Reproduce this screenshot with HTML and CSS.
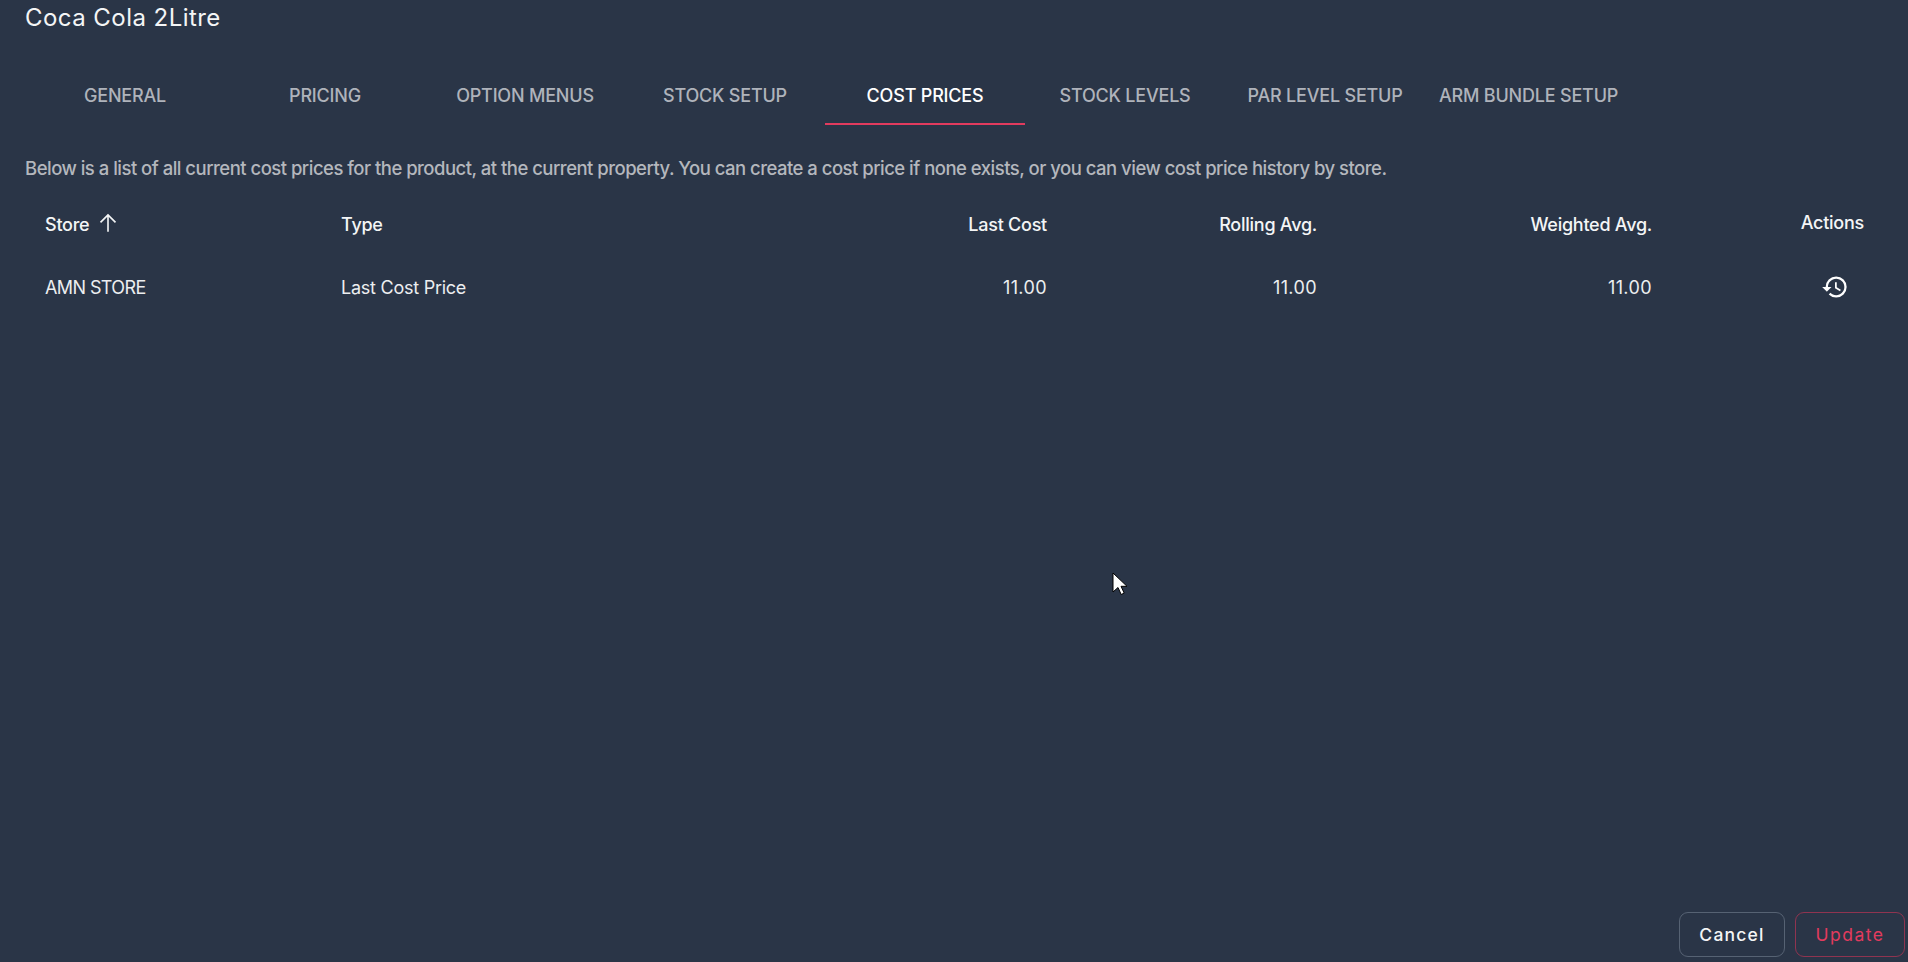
FILE: index.html
```html
<!DOCTYPE html>
<html>
<head>
    <title>Coca Cola 2Litre - Cost Prices</title>
    <link rel="stylesheet" href="styles.css">
</head>
<body>
    <div class="page">
        <h2 class="title">Coca Cola 2Litre</h2>

        <div class="tabs">
            <div class="tab">GENERAL</div>
            <div class="tab">PRICING</div>
            <div class="tab">OPTION MENUS</div>
            <div class="tab">STOCK SETUP</div>
            <div class="tab active">COST PRICES</div>
            <div class="tab">STOCK LEVELS</div>
            <div class="tab">PAR LEVEL SETUP</div>
            <div class="tab tab-last">ARM BUNDLE SETUP</div>
        </div>

        <p class="intro">Below is a list of all current cost prices for the product, at the current property. You can create a cost price if none exists, or you can view cost price history by store.</p>

        <table class="prices">
            <colgroup>
                <col class="col-store">
                <col class="col-type">
                <col class="col-last">
                <col class="col-rolling">
                <col class="col-weighted">
                <col class="col-actions">
            </colgroup>
            <tr>
                <th>Store <svg class="sort" viewBox="0 0 16 16"><path d="M8 15V1.5M2 7.5l6-6 6 6"/></svg></th>
                <th>Type</th>
                <th class="num">Last Cost</th>
                <th class="num">Rolling Avg.</th>
                <th class="num">Weighted Avg.</th>
                <th class="num actions-head">Actions</th>
            </tr>
            <tr>
                <td class="store-name">AMN STORE</td>
                <td>Last Cost Price</td>
                <td class="num amount">11.00</td>
                <td class="num amount">11.00</td>
                <td class="num amount">11.00</td>
                <td class="num"><svg class="history" viewBox="0 0 24 24"><path d="M13 3a9 9 0 0 0-9 9H1l3.89 3.89.07.14L9 12H6c0-3.87 3.13-7 7-7s7 3.13 7 7-3.13 7-7 7c-1.93 0-3.68-.79-4.94-2.06l-1.42 1.42A8.954 8.954 0 0 0 13 21a9 9 0 0 0 0-18zm-1 5v5l4.28 2.54.72-1.21-3.5-2.08V8H12z"/></svg></td>
            </tr>
        </table>

        <div class="footer">
            <button class="btn">Cancel</button>
            <button class="btn btn-update">Update</button>
        </div>
    </div>

    <svg class="cursor" viewBox="0 0 16 24"><path d="M1 1v19l5-4.5 3.2 7 3-1.4-3.2-6.8H15z"/></svg>
</body>
</html>
```

FILE: styles.css
```css
html, body { margin: 0; height: 100%; overflow: hidden; }
body { background: #2a3547; color: #fff; font-family: Inter, "Liberation Sans", sans-serif; }
.page { height: 100%; box-sizing: border-box; display: flex; flex-direction: column; padding: 0 3px 5px 25px; }

.title { margin: 0; padding-top: 3px; font-size: 24px; line-height: 30px; font-weight: 400; letter-spacing: 0.45px; color: #f4f5f6; }

.tabs { display: flex; margin-top: 33px; }
.tab { min-width: 200px; height: 59px; box-sizing: border-box; padding: 2px 14px 0; display: flex; align-items: center; justify-content: center; font-size: 18px; font-weight: 500; letter-spacing: -0.2px; color: #afb3bb; border-bottom: 2px solid transparent; }
.tab.active { color: #fff; border-bottom-color: #e23b5e; }

.intro { margin: 31px 0 0; font-size: 18.5px; line-height: 24px; letter-spacing: -0.515px; font-weight: 500; color: #b4b7bd; }

.prices { border-collapse: collapse; table-layout: fixed; width: 1851px; margin: 18px 0 0 4px; }
.col-store { width: 296px; }
.col-type { width: 440px; }
.col-last { width: 298px; }
.col-rolling { width: 270px; }
.col-weighted { width: 335px; }
.col-actions { width: 212px; }
th, td { padding: 0 16px; text-align: left; font-size: 18px; letter-spacing: -0.25px; white-space: nowrap; }
th { height: 52px; font-weight: 500; color: #f4f5f6; }
td { height: 74px; font-weight: 400; color: #eceef0; }
.num { text-align: right; }
.store-name { letter-spacing: -0.6px; }
.amount { letter-spacing: 0.4px; }
.actions-head { position: relative; top: -2px; }

.sort { width: 20px; height: 20px; margin-left: 4px; vertical-align: -2px; fill: none; stroke: #f4f5f6; stroke-width: 1.3; }
.history { width: 28px; height: 28px; margin-right: 15px; vertical-align: middle; fill: #fff; }

.footer { margin-top: auto; display: flex; justify-content: flex-end; gap: 10px; }
.btn { height: 45px; width: 106px; padding: 0; background: transparent; border: 1px solid #566273; border-radius: 9px; font-family: inherit; font-size: 17.5px; font-weight: 500; letter-spacing: 1.2px; color: #f4f5f6; }
.btn-update { width: 110px; font-weight: 400; letter-spacing: 1.5px; color: #e23b5e; border-color: #8f3450; }

.cursor { position: absolute; left: 1112px; top: 572px; width: 16px; height: 24px; fill: #fff; stroke: #000; stroke-width: 1; }
```
